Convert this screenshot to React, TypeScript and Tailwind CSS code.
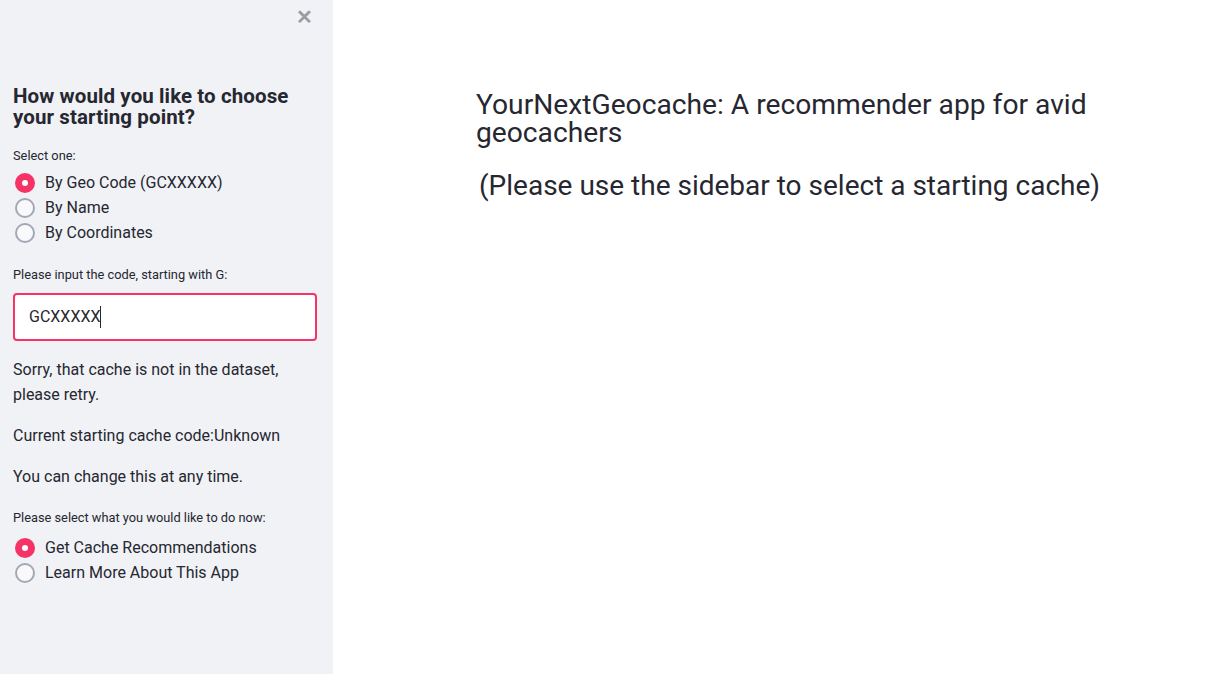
import React from "react";

const font = { fontFamily: '"Roboto", "Liberation Sans", sans-serif' };

function Radio({ checked, label }: { checked: boolean; label: string }) {
  return (
    <div className="flex items-center h-[25px]">
      {checked ? (
        <span className="w-[20px] h-[20px] rounded-full bg-[#f63366] flex items-center justify-center ml-[15px] mr-[10px]">
          <span className="w-[6px] h-[6px] rounded-full bg-white" />
        </span>
      ) : (
        <span className="w-[20px] h-[20px] rounded-full bg-[#f9f9fb] border-2 border-[#a3a8b4] ml-[15px] mr-[10px]" />
      )}
      <span className="text-[16px] text-[#262730]">{label}</span>
    </div>
  );
}

export default function App() {
  return (
    <div className="flex w-[1212px] h-[674px] bg-white text-[#262730]" style={font}>
      <aside className="w-[333px] h-full bg-[#f0f2f6] flex flex-col px-[13px] relative">
        <div className="absolute right-[20px] top-[7px] text-[#9a9ca3] text-[20px] font-bold leading-none">✕</div>
        <h2 className="mt-[86px] text-[20.5px] font-bold leading-[21px] tracking-[0.1px]">
          How would you like to choose
          <br />
          your starting point?
        </h2>
        <div className="mt-[20px] text-[12.8px] leading-[16px]">Select one:</div>
        <div className="mt-[6px] -ml-[13px] flex flex-col">
          <Radio checked label="By Geo Code (GCXXXXX)" />
          <Radio checked={false} label="By Name" />
          <Radio checked={false} label="By Coordinates" />
        </div>
        <div className="mt-[22px] text-[12.8px] leading-[16px]">Please input the code, starting with G:</div>
        <div className="mt-[10px] h-[48px] w-[304px] bg-white border-2 border-[#f63366] rounded-[4px] flex items-center pl-[14px] text-[16px]">
          GCXXXXX<span className="inline-block w-[1px] h-[22px] bg-[#262730]" />
        </div>
        <p className="mt-[16px] text-[16px] leading-[25px]">
          Sorry, that cache is not in the dataset,
          <br />
          please retry.
        </p>
        <p className="mt-[16px] text-[16px] leading-[25px]">Current starting cache code:Unknown</p>
        <p className="mt-[16px] text-[16px] leading-[25px]">You can change this at any time.</p>
        <div className="mt-[21px] text-[12.8px] leading-[16px]">Please select what you would like to do now:</div>
        <div className="mt-[9px] -ml-[13px] flex flex-col">
          <Radio checked label="Get Cache Recommendations" />
          <Radio checked={false} label="Learn More About This App" />
        </div>
      </aside>
      <main className="flex-1 pl-[143px] pt-[91px]">
        <h1 className="text-[28.2px] leading-[28px] font-normal">
          YourNextGeocache: A recommender app for avid
          <br />
          geocachers
        </h1>
        <div className="mt-[24px] ml-[3px] text-[28px] leading-[30px]">(Please use the sidebar to select a starting cache)</div>
      </main>
    </div>
  );
}
